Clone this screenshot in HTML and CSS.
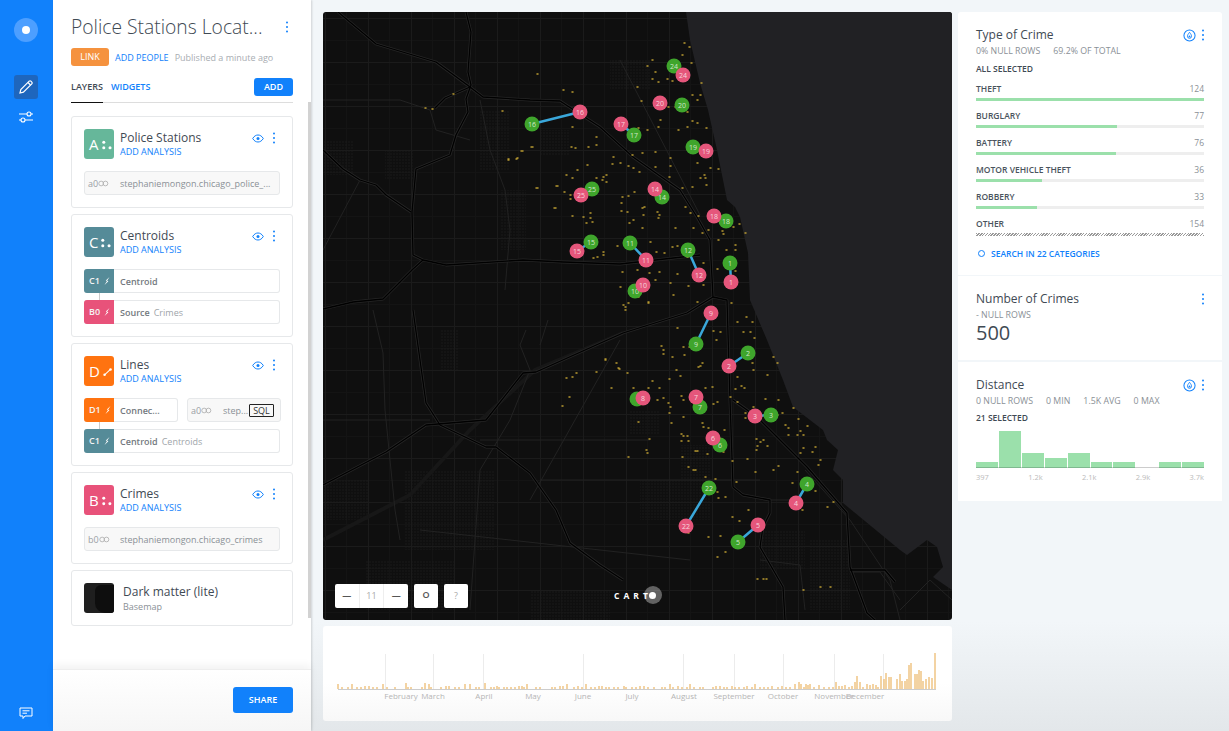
FILE: index.html
```html
<!DOCTYPE html>
<html>
<head>
  <meta charset="UTF-8">
  <title>Police Stations Locations</title>
  <link rel="stylesheet" href="styles.css">
</head>
<body>
  <svg class="defs" width="0" height="0">
    <symbol id="kebab" viewBox="0 0 4 12"><circle cx="2" cy="1.5" r="1"/><circle cx="2" cy="6" r="1"/><circle cx="2" cy="10.5" r="1"/></symbol>
    <symbol id="eye" viewBox="0 0 12 9"><path d="M.7 4.5C2.2 2 4 1 6 1s3.8 1 5.3 3.5C9.8 7 8 8 6 8S2.200 7 .7 4.500z" fill="none" stroke="currentColor" stroke-width="1"/><circle cx="6" cy="4.500" r="1.500" fill="currentColor"/></symbol>
    <symbol id="bolt" viewBox="0 0 6 8"><path d="M5.500 0 1.800 3.400 3 3.900.5 8 4.400 4.200 3.100 3.700z" fill="currentColor"/></symbol>
    <symbol id="points" viewBox="0 0 14 10"><circle cx="2" cy="2" r="1.700"/><circle cx="2" cy="8" r="1.700"/><circle cx="9" cy="8" r="1.700"/></symbol>
    <symbol id="link" viewBox="0 0 14 8"><circle cx="4" cy="4" r="3" fill="none" stroke="currentColor"/><circle cx="9.500" cy="4" r="3" fill="none" stroke="currentColor"/></symbol>
    <symbol id="drop" viewBox="0 0 14 14"><circle cx="7" cy="7" r="6" fill="none" stroke="currentColor" stroke-width="1.100"/><path d="M7 3.600C8.300 5.300 9.200 6.400 9.200 7.800a2.200 2.200 0 0 1-4.400 0C4.800 6.400 5.700 5.300 7 3.600z" fill="none" stroke="currentColor" stroke-width="1"/><circle cx="7" cy="8" r="1" fill="currentColor"/></symbol>
  </svg>

  <nav class="nav">
    <div class="nav-logo"><span></span></div>
    <a class="nav-item is-active">
      <svg width="16" height="16" viewBox="0 0 16 16" fill="none" stroke="#fff" stroke-width="1.200"><path d="M2 14l.8-3.400L11.200 2.200a1.200 1.200 0 0 1 1.700 0l.9.900a1.200 1.200 0 0 1 0 1.700L5.400 13.200z"/><path d="M10 3.500l2.500 2.500"/></svg>
    </a>
    <a class="nav-item">
      <svg width="16" height="14" viewBox="0 0 16 14" fill="none" stroke="#fff" stroke-width="1.100"><path d="M1 4h8M13 4h2M1 10h2M7 10h8"/><circle cx="11" cy="4" r="2"/><circle cx="5" cy="10" r="2"/></svg>
    </a>
    <a class="nav-chat">
      <svg width="14" height="13" viewBox="0 0 14 13" fill="none" stroke="#fff" stroke-width="1"><path d="M1 1h12v8H6L4 11.500V9H1z"/><path d="M3.500 3.800h7M3.500 6.200h4.500"/></svg>
    </a>
  </nav>

  <aside class="panel">
    <header class="panel-head">
      <div class="title-row">
        <h1>Police Stations Locat...</h1>
        <svg class="kebab"><use href="#kebab"/></svg>
      </div>
      <div class="meta-row">
        <span class="btn-link">LINK</span>
        <a class="blue">ADD PEOPLE</a>
        <span class="muted">Published a minute ago</span>
      </div>
      <div class="tabs">
        <a class="tab is-active">LAYERS</a>
        <a class="tab blue">WIDGETS</a>
        <span class="btn-add">ADD</span>
      </div>
    </header>

    <div class="layers">
      <section class="card">
        <div class="card-head">
          <div class="badge green">A<svg><use href="#points"/></svg></div>
          <div class="card-title"><h3>Police Stations</h3><a class="blue">ADD ANALYSIS</a></div>
          <svg class="eye"><use href="#eye"/></svg>
          <svg class="kebab"><use href="#kebab"/></svg>
        </div>
        <div class="source"><span class="node-id">a0<svg><use href="#link"/></svg></span><span class="source-name">stephaniemongon.chicago_police_...</span></div>
      </section>

      <section class="card">
        <div class="card-head">
          <div class="badge teal">C<svg><use href="#points"/></svg></div>
          <div class="card-title"><h3>Centroids</h3><a class="blue">ADD ANALYSIS</a></div>
          <svg class="eye"><use href="#eye"/></svg>
          <svg class="kebab"><use href="#kebab"/></svg>
        </div>
        <div class="nodes">
          <div class="node"><span class="node-tag teal">C1<svg><use href="#bolt"/></svg></span><b>Centroid</b></div>
          <div class="node"><span class="node-tag pink">B0<svg><use href="#bolt"/></svg></span><b>Source</b><i>Crimes</i></div>
        </div>
      </section>

      <section class="card">
        <div class="card-head">
          <div class="badge orange">D<svg viewBox="0 0 14 10"><path d="M2 8.500 9 2" stroke="#fff" stroke-width="1.300"/><circle cx="2" cy="8.500" r="1.600"/><circle cx="9.500" cy="1.800" r="1.600"/></svg></div>
          <div class="card-title"><h3>Lines</h3><a class="blue">ADD ANALYSIS</a></div>
          <svg class="eye"><use href="#eye"/></svg>
          <svg class="kebab"><use href="#kebab"/></svg>
        </div>
        <div class="nodes">
          <div class="node-split">
            <div class="node"><span class="node-tag orange">D1<svg><use href="#bolt"/></svg></span><b>Connec...</b></div>
            <div class="source source-small"><span class="node-id">a0<svg><use href="#link"/></svg></span><span class="source-name">step...</span><span class="sql">SQL</span></div>
          </div>
          <div class="node"><span class="node-tag teal">C1<svg><use href="#bolt"/></svg></span><b>Centroid</b><i>Centroids</i></div>
        </div>
      </section>

      <section class="card">
        <div class="card-head">
          <div class="badge pink">B<svg><use href="#points"/></svg></div>
          <div class="card-title"><h3>Crimes</h3><a class="blue">ADD ANALYSIS</a></div>
          <svg class="eye"><use href="#eye"/></svg>
          <svg class="kebab"><use href="#kebab"/></svg>
        </div>
        <div class="source"><span class="node-id">b0<svg><use href="#link"/></svg></span><span class="source-name">stephaniemongon.chicago_crimes</span></div>
      </section>

      <section class="card card-base">
        <div class="thumb"><span></span></div>
        <div class="base-title"><h3>Dark matter (lite)</h3><span>Basemap</span></div>
      </section>
    </div>

    <div class="scrollbar"></div>

    <footer class="panel-foot"><span class="btn-share">SHARE</span></footer>
  </aside>

  <main class="content">
    <div class="stage">
      <div class="map">
        <svg class="map-svg" viewBox="323 12 629 608" width="629" height="608">
          <defs>
            <pattern id="grid" x="325" y="18" width="43" height="44" patternUnits="userSpaceOnUse">
              <path d="M21.500 0V44M0 22.500H43" stroke="#141414" stroke-width="1" fill="none"/>
              <path d="M.5 0V44M0 .5H43" stroke="#1b1b1b" stroke-width="1" fill="none"/>
            </pattern>
            <pattern id="hatch" width="3" height="3" patternUnits="userSpaceOnUse">
              <circle cx="1" cy="1" r=".7" fill="#1b1b1b"/>
            </pattern>
          </defs>
          <rect x="323" y="12" width="629" height="608" fill="#0f0f0f"/>
          <rect x="323" y="12" width="629" height="608" fill="url(#grid)"/>

          <g fill="url(#hatch)">
            <rect x="323" y="140" width="30" height="35"/><rect x="385" y="150" width="28" height="30"/>
            <rect x="480" y="110" width="30" height="60"/><rect x="500" y="190" width="26" height="60"/>
            <rect x="323" y="480" width="45" height="40"/><rect x="405" y="470" width="90" height="80"/>
            <rect x="365" y="560" width="90" height="50"/><rect x="440" y="330" width="18" height="40"/>
            <rect x="540" y="130" width="30" height="25"/><rect x="610" y="60" width="40" height="30"/>
            <rect x="640" y="480" width="70" height="40"/><rect x="530" y="590" width="80" height="30"/>
            <rect x="680" y="445" width="30" height="35"/><rect x="630" y="410" width="30" height="25"/>
            <rect x="760" y="530" width="45" height="40"/><rect x="810" y="540" width="40" height="70"/>
          </g>

          <path class="lake" d="M686 12 690 40 700 83 708 110 717 150 727 200 735 207 740 217 748 253 750 300 767 340 783 380 793 407 823 430 827 440 838 450 833 470 843 480 843 503 860 517 900 550 907 555 927 540 937 547 943 567 933 577 952 590V535L940 543 952 537V12Z"/>

          <g class="road-wide">
            <path d="M323 540 410 495 470 430 535 370 623 333"/>
          </g>
          <g class="road">
            <path d="M373 310 383 353 385 410 395 510 400 540"/>
            <path d="M323 100H400L430 110 436 130 470 140"/>
            <path d="M480 100 490 150 505 190 510 230 505 290"/>
            <path d="M526 330 520 345 530 370 510 420 480 470 470 610"/>
            <path d="M323 420H430M480 440H650M540 480H760M420 530 600 550 690 560M530 500 620 340"/>
            <path d="M548 320 540 345M323 250 360 180M620 60 700 215"/>
            <path d="M766 500 800 500M805 470 850 520 890 580 900 620"/>
            <path d="M760 560 800 565 805 610M850 572H880L900 600M952 600 930 580 900 610"/>
          </g>
          <g id="highways">
            <path d="M338 12 376 44 436 62 470 87 483 97 530 100 560 101 600 127 633 157 680 190 697 217 710 240 713 297 727 300 730 400 733 487 743 495 770 500 770 513 763 527 760 547 783 587 785 620"/>
            <path d="M466 12 471 32 468 72 471 85 466 99 468 112 456 135 450 155 416 169 412 212 413 255 423 260 446 265 523 260 563 262 620 264 700 255"/>
            <path d="M323 150 343 169 360 180 376 185 386 195 411 212"/>
            <path d="M323 309 353 302 383 299 413 269 423 260"/>
            <path d="M323 485 386 452 426 425 486 420 523 373 536 372 623 333 687 313 713 297"/>
            <path d="M413 310 426 403 440 425 486 447 496 447 530 473 556 510 570 543 600 565 623 580"/>
            <path d="M733 400 757 417 807 467 847 513 850 567 867 613 875 620"/>
            <path d="M435 108 445 98 470 87M850 570H885L895 582"/>
          </g>
          <use href="#highways" class="highway-core"/>

          <path class="crime-dots" d="M537 74h1M684 43h1M689 47h1M682 55h1M691 63h1M647 66h1M652 60h1M655 72h1M652 79h1M658 82h1M667 79h1M672 81h1M701 83h1M637 87h1M692 95h1M700 95h1M697 100h1M641 101h1M675 107h1M668 107h1M687 112h1M692 121h1M697 123h1M687 127h1M706 128h1M678 130h1M660 120h1M658 127h1M638 128h1M647 130h1M563 90h1M572 92h1M502 111h1M572 127h1M596 137h1M588 147h1M571 147h1M575 148h1M596 145h1M532 147h1M522 151h1M517 158h1M508 159h1M613 157h1M612 164h1M620 163h1M632 155h1M642 153h1M655 152h1M628 166h1M633 168h1M639 172h1M655 167h1M670 158h1M670 166h1M669 177h1M697 163h1M710 168h1M718 169h1M704 175h1M700 178h1M705 178h1M706 185h1M682 188h1M692 187h1M577 170h1M587 165h1M566 175h1M572 178h1M596 178h1M603 177h1M606 175h1M602 180h1M606 182h1M537 188h1M557 186h1M564 192h1M570 195h1M570 199h1M622 197h1M628 196h1M634 192h1M621 203h1M644 207h1M642 208h1M554 208h1M572 216h1M583 217h1M590 213h1M590 218h1M586 223h1M592 222h1M621 211h1M627 212h1M633 220h1M629 223h1M643 215h1M642 228h1M657 212h1M659 215h1M658 218h1M685 207h1M690 213h1M698 216h1M675 228h1M693 228h1M708 230h1M702 233h1M718 240h1M722 231h1M723 234h1M739 224h1M733 227h1M745 233h1M735 245h1M735 250h1M726 250h1M650 242h1M617 246h1M603 252h1M593 258h1M597 257h1M603 255h1M656 252h1M664 253h1M672 247h1M677 246h1M687 257h1M703 263h1M717 269h1M735 271h1M622 272h1M637 270h1M649 273h1M659 272h1M677 274h1M670 283h1M620 287h1M625 307h1M655 280h1M673 295h1M688 286h1M703 285h1M648 303h1M638 297h1M697 302h1M623 305h1M628 303h1M648 302h1M625 310h1M731 303h1M746 317h1M737 322h1M752 322h1M743 332h1M750 332h1M754 338h1M677 328h1M713 331h1M720 332h1M716 340h1M661 346h1M663 350h1M663 354h1M683 347h1M689 347h1M684 355h1M672 357h1M605 359h1M616 363h1M618 368h1M627 373h1M698 367h1M702 363h1M700 366h1M676 370h1M680 376h1M669 379h1M737 377h1M741 386h1M744 388h1M735 389h1M753 370h1M752 363h1M773 357h1M777 363h1M767 375h1M611 388h1M633 388h1M652 381h1M648 388h1M659 388h1M657 400h1M663 398h1M681 396h1M683 400h1M668 403h1M670 407h1M669 413h1M671 423h1M638 422h1M683 417h1M705 388h1M712 387h1M717 402h1M713 404h1M730 397h1M737 402h1M753 407h1M765 399h1M778 400h1M793 408h1M782 413h1M777 415h1M798 419h1M745 413h1M745 418h1M785 425h1M807 426h1M788 428h1M800 431h1M803 435h1M797 435h1M788 435h1M702 423h1M703 427h1M708 428h1M724 430h1M681 434h1M683 436h1M681 441h1M687 436h1M688 441h1M649 439h1M646 450h1M647 453h1M628 457h1M695 451h1M697 451h1M707 454h1M723 452h1M682 457h1M732 461h1M747 459h1M756 439h1M760 442h1M763 440h1M757 446h1M756 450h1M767 446h1M803 448h1M815 447h1M812 452h1M820 460h1M818 465h1M800 453h1M797 472h1M778 466h1M773 470h1M755 472h1M688 467h1M693 470h1M695 470h1M705 477h1M715 479h1M736 482h1M792 483h1M815 491h1M718 498h1M725 497h1M717 492h1M827 507h1M802 510h1M748 510h1M732 517h1M739 521h1M720 536h1M708 537h1M688 533h1M725 552h1M717 557h1M757 579h1M763 579h1M766 579h1M803 590h1M820 587h1M830 587h1M833 502h1M453 94h1M425 108h1M432 109h1M502 111h1M508 160h1M516 159h1M521 151h1M531 147h1M536 188h1M556 186h1M555 208h1M566 378h1M572 377h1M576 373h1M596 372h1M605 360h1M616 363h1M619 369h1M611 388h1M569 397h1M562 406h1"/>

          <g class="links">
            <path d="M532 124 580 112M621 124 634 135M646 260 630 243M688 250 699 275M730 263 731 282M577 251 591 242M711 313 696 344M748 353 729 366M755 416 771 415M709 488 686 526M758 525 738 542M807 484 796 503"/>
          </g>

          <g class="pins">
            <circle class="pin-g" cx="532" cy="124" r="7.500"/><text x="532" y="126.500">16</text>
            <circle class="pin-r" cx="580" cy="112" r="7.500"/><text x="580" y="114.500">16</text>
            <circle class="pin-g" cx="634" cy="135" r="7.500"/><text x="634" y="137.500">17</text>
            <circle class="pin-r" cx="621" cy="124" r="7.500"/><text x="621" y="126.500">17</text>
            <circle class="pin-g" cx="674" cy="66" r="7.500"/><text x="674" y="68.500">24</text>
            <circle class="pin-r" cx="683" cy="75" r="7.500"/><text x="683" y="77.500">24</text>
            <circle class="pin-r" cx="660" cy="103" r="7.500"/><text x="660" y="105.500">20</text>
            <circle class="pin-g" cx="682" cy="105" r="7.500"/><text x="682" y="107.500">20</text>
            <circle class="pin-g" cx="693" cy="147" r="7.500"/><text x="693" y="149.500">19</text>
            <circle class="pin-r" cx="706" cy="151" r="7.500"/><text x="706" y="153.500">19</text>
            <circle class="pin-g" cx="592" cy="189" r="7.500"/><text x="592" y="191.500">25</text>
            <circle class="pin-r" cx="581" cy="195" r="7.500"/><text x="581" y="197.500">25</text>
            <circle class="pin-g" cx="662" cy="197" r="7.500"/><text x="662" y="199.500">14</text>
            <circle class="pin-r" cx="655" cy="189" r="7.500"/><text x="655" y="191.500">14</text>
            <circle class="pin-g" cx="726" cy="221" r="7.500"/><text x="726" y="223.500">18</text>
            <circle class="pin-r" cx="714" cy="216" r="7.500"/><text x="714" y="218.500">18</text>
            <circle class="pin-g" cx="591" cy="242" r="7.500"/><text x="591" y="244.500">15</text>
            <circle class="pin-r" cx="577" cy="251" r="7.500"/><text x="577" y="253.500">15</text>
            <circle class="pin-g" cx="630" cy="243" r="7.500"/><text x="630" y="245.500">11</text>
            <circle class="pin-r" cx="646" cy="260" r="7.500"/><text x="646" y="262.500">11</text>
            <circle class="pin-g" cx="688" cy="250" r="7.500"/><text x="688" y="252.500">12</text>
            <circle class="pin-r" cx="699" cy="275" r="7.500"/><text x="699" y="277.500">12</text>
            <circle class="pin-g" cx="730" cy="263" r="7.500"/><text x="730" y="265.500">1</text>
            <circle class="pin-r" cx="731" cy="282" r="7.500"/><text x="731" y="284.500">1</text>
            <circle class="pin-g" cx="635" cy="291" r="7.500"/><text x="635" y="293.500">10</text>
            <circle class="pin-r" cx="643" cy="285" r="7.500"/><text x="643" y="287.500">10</text>
            <circle class="pin-r" cx="711" cy="313" r="7.500"/><text x="711" y="315.500">9</text>
            <circle class="pin-g" cx="696" cy="344" r="7.500"/><text x="696" y="346.500">9</text>
            <circle class="pin-g" cx="748" cy="353" r="7.500"/><text x="748" y="355.500">2</text>
            <circle class="pin-r" cx="729" cy="366" r="7.500"/><text x="729" y="368.500">2</text>
            <circle class="pin-g" cx="637" cy="399" r="7.500"/>
            <circle class="pin-r" cx="643" cy="398" r="7.500"/><text x="643" y="400.500">8</text>
            <circle class="pin-g" cx="700" cy="407" r="7.500"/><text x="700" y="409.500">7</text>
            <circle class="pin-r" cx="696" cy="397" r="7.500"/><text x="696" y="399.500">7</text>
            <circle class="pin-r" cx="755" cy="416" r="7.500"/><text x="755" y="418.500">3</text>
            <circle class="pin-g" cx="771" cy="415" r="7.500"/><text x="771" y="417.500">3</text>
            <circle class="pin-g" cx="720" cy="445" r="7.500"/><text x="720" y="447.500">6</text>
            <circle class="pin-r" cx="713" cy="438" r="7.500"/><text x="713" y="440.500">6</text>
            <circle class="pin-g" cx="709" cy="488" r="7.500"/><text x="709" y="490.500">22</text>
            <circle class="pin-r" cx="686" cy="526" r="7.500"/><text x="686" y="528.500">22</text>
            <circle class="pin-r" cx="758" cy="525" r="7.500"/><text x="758" y="527.500">5</text>
            <circle class="pin-g" cx="738" cy="542" r="7.500"/><text x="738" y="544.500">5</text>
            <circle class="pin-g" cx="807" cy="484" r="7.500"/><text x="807" y="486.500">4</text>
            <circle class="pin-r" cx="796" cy="503" r="7.500"/><text x="796" y="505.500">4</text>
          </g>
        </svg>

        <div class="map-controls">
          <div class="zoom-group"><span class="ctl-cell">—</span><span class="ctl-cell ctl-num">11</span><span class="ctl-cell">—</span></div>
          <span class="ctl-btn ctl-search">O</span>
          <span class="ctl-btn ctl-help">?</span>
        </div>
        <div class="carto">CART<span class="carto-o"><span></span></span></div>
      </div>

      <div class="timeline">
        <svg viewBox="323 626 629 95" width="629" height="95">
          <path class="tl-grid" d="M385.500 654V689M433.500 654V689M483.500 654V689M583.500 654V689M683.500 654V689M734.500 654V689M783.500 654V689M834.500 654V689M883.500 654V689"/>
          <path class="tl-bars" d="M338 689v-5M342 689v-2M348 689v-2M352 689v-5M357 689v-2M361 689v-2M365 689v-3M369 689v-3M373 689v-2M377 689v-2M383 689v-5M387 689v-2M395 689v-2M406 689v-6M408 689v-2M411 689v-2M422 689v-2M425 689v-6M429 689v-5M431 689v-2M441 689v-2M446 689v-3M449 689v-3M455 689v-2M459 689v-2M465 689v-5M470 689v-5M476 689v-2M479 689v-2M485 689v-6M491 689v-2M494 689v-2M497 689v-3M499 689v-2M504 689v-2M507 689v-2M511 689v-2M515 689v-2M519 689v-3M522 689v-3M524 689v-2M527 689v-5M536 689v-2M540 689v-2M552 689v-2M555 689v-2M560 689v-3M563 689v-3M567 689v-5M574 689v-2M578 689v-3M582 689v-2M586 689v-5M591 689v-2M595 689v-2M599 689v-3M602 689v-3M606 689v-2M609 689v-2M614 689v-2M618 689v-2M624 689v-3M626 689v-2M632 689v-2M636 689v-2M640 689v-3M644 689v-3M648 689v-2M654 689v-2M662 689v-2M665 689v-2M670 689v-5M673 689v-2M678 689v-3M682 689v-2M687 689v-2M690 689v-5M694 689v-2M700 689v-2M703 689v-2M713 689v-2M716 689v-3M720 689v-3M724 689v-2M727 689v-2M732 689v-3M735 689v-2M739 689v-2M744 689v-2M747 689v-3M752 689v-2M755 689v-5M760 689v-2M764 689v-2M768 689v-2M772 689v-3M778 689v-2M782 689v-3M786 689v-2M790 689v-2M795 689v-5M799 689v-7M801 689v-5M804 689v-2M806 689v-5M808 689v-4M810 689v-5M814 689v-2M819 689v-4M824 689v-2M829 689v-2M833 689v-2M836 689v-7M839 689v-3M842 689v-3M845 689v-4M849 689v-2M852 689v-3M855 689v-7M857 689v-13M860 689v-7M863 689v-2M867 689v-5M870 689v-4M873 689v-5M876 689v-4M878 689v-2M881 689v-13M884 689v-10M886 689v-16M889 689v-12M891 689v-12M897 689v-10M900 689v-15M902 689v-8M905 689v-8M907 689v-10M909 689v-24M911 689v-26M915 689v-15M917 689v-15M919 689v-19M921 689v-18M923 689v-8M926 689v-10M929 689v-12M932 689v-11M935 689v-36"/>
          <path class="tl-axis" d="M338 689.500H936"/>
          <g class="tl-labels">
            <text x="401" y="699">February</text><text x="433" y="699">March</text><text x="484" y="699">April</text>
            <text x="533" y="699">May</text><text x="583" y="699">June</text><text x="632" y="699">July</text>
            <text x="684" y="699">August</text><text x="734" y="699">September</text><text x="783" y="699">October</text>
            <text x="834" y="699">November</text><text x="865" y="699">December</text>
          </g>
        </svg>
      </div>
    </div>

    <div class="widgets">
      <section class="widget widget-cat">
        <div class="widget-head"><h4>Type of Crime</h4><svg class="drop"><use href="#drop"/></svg><svg class="kebab"><use href="#kebab"/></svg></div>
        <div class="stats"><span>0% NULL ROWS</span><span>69.2% OF TOTAL</span></div>
        <div class="selected">ALL SELECTED</div>
        <div class="cats">
          <div class="cat"><div class="cat-row"><b>THEFT</b><span>124</span></div><div class="track"><div class="fill" style="width:100%"></div></div></div>
          <div class="cat"><div class="cat-row"><b>BURGLARY</b><span>77</span></div><div class="track"><div class="fill" style="width:62%"></div></div></div>
          <div class="cat"><div class="cat-row"><b>BATTERY</b><span>76</span></div><div class="track"><div class="fill" style="width:61.300%"></div></div></div>
          <div class="cat"><div class="cat-row"><b>MOTOR VEHICLE THEFT</b><span>36</span></div><div class="track"><div class="fill" style="width:29%"></div></div></div>
          <div class="cat"><div class="cat-row"><b>ROBBERY</b><span>33</span></div><div class="track"><div class="fill" style="width:26.600%"></div></div></div>
          <div class="cat"><div class="cat-row"><b>OTHER</b><span>154</span></div><div class="track track-other"></div></div>
        </div>
        <a class="search-cat"><i></i>SEARCH IN 22 CATEGORIES</a>
      </section>

      <section class="widget widget-num">
        <div class="widget-head"><h4>Number of Crimes</h4><svg class="kebab"><use href="#kebab"/></svg></div>
        <div class="stats"><span>- NULL ROWS</span></div>
        <div class="big">500</div>
      </section>

      <section class="widget widget-hist">
        <div class="widget-head"><h4>Distance</h4><svg class="drop"><use href="#drop"/></svg><svg class="kebab"><use href="#kebab"/></svg></div>
        <div class="stats"><span>0 NULL ROWS</span><span>0 MIN</span><span>1.5K AVG</span><span>0 MAX</span></div>
        <div class="selected">21 SELECTED</div>
        <div class="hist">
          <div class="hist-bar" style="height:5px"></div>
          <div class="hist-bar" style="height:36px"></div>
          <div class="hist-bar" style="height:14px"></div>
          <div class="hist-bar" style="height:9px"></div>
          <div class="hist-bar" style="height:14px"></div>
          <div class="hist-bar" style="height:5px"></div>
          <div class="hist-bar" style="height:5px"></div>
          <div class="hist-bar" style="height:0"></div>
          <div class="hist-bar" style="height:5px"></div>
          <div class="hist-bar" style="height:5px"></div>
        </div>
        <div class="hist-axis"><span>397</span><span>1.2k</span><span>2.1k</span><span>2.9k</span><span>3.7k</span></div>
      </section>
    </div>
  </main>
</body>
</html>
```

FILE: styles.css
```css
html, body {
  margin: 0;
  height: 100%;
}
body {
  display: flex;
  height: 731px;
  overflow: hidden;
  font-family: "Open Sans", sans-serif;
  color: #3f4a54;
  background: linear-gradient(#f2f6f9 85%, #e3e7ea 100%);
}
h1, h3, h4 {
  margin: 0;
  font-weight: 400;
}
.defs {
  position: absolute;
}
.blue {
  color: #1181fb;
}
.muted {
  color: #a8adb2;
}

/* left nav */
.nav {
  width: 53px;
  flex: none;
  background: #1181fb;
  display: flex;
  flex-direction: column;
  align-items: center;
  padding: 18px 1px 0 0;
  box-sizing: border-box;
}
.nav-logo {
  width: 24px;
  height: 24px;
  border-radius: 50%;
  background: #4d9fff;
  display: flex;
  align-items: center;
  justify-content: center;
  margin-bottom: 33px;
}
.nav-logo span {
  width: 8px;
  height: 8px;
  background: #fff;
  border-radius: 50%;
}
.nav-item {
  width: 24px;
  height: 24px;
  border-radius: 3px;
  display: flex;
  align-items: center;
  justify-content: center;
}
.nav-item.is-active {
  background: #1e66bd;
  margin-bottom: 6px;
}
.nav-chat {
  margin-top: auto;
  margin-bottom: 15px;
  height: 13px;
}

/* layers panel */
.panel {
  width: 258px;
  flex: none;
  background: #fff;
  position: relative;
  display: flex;
  flex-direction: column;
  box-shadow: 1px 0 2px rgba(0, 0, 0, .15);
  z-index: 2;
}
.panel-head {
  padding: 15px 18px 0;
}
.title-row {
  display: flex;
  align-items: center;
  justify-content: space-between;
  height: 24px;
}
.title-row h1 {
  font-size: 19.300px;
  font-weight: 300;
  line-height: 24px;
  color: #3f4a54;
  white-space: nowrap;
}
.kebab {
  width: 4px;
  height: 12px;
  fill: #1181fb;
  flex: none;
}
.title-row .kebab {
  margin-right: 4px;
}
.meta-row {
  display: flex;
  align-items: center;
  gap: 6px;
  margin-top: 9px;
  font-size: 9px;
  height: 18px;
  white-space: nowrap;
}
.btn-link {
  width: 38px;
  height: 18px;
  background: #f5923e;
  color: #fff;
  border-radius: 3px;
  text-align: center;
  line-height: 18px;
}
.tabs {
  display: flex;
  align-items: center;
  gap: 8px;
  height: 24px;
  margin-top: 12px;
  border-bottom: 1px solid #ddd;
  padding-bottom: 0;
  font-size: 9px;
  font-weight: 600;
  position: relative;
}
.tab {
  height: 24px;
  line-height: 18px;
}
.tab.is-active {
  border-bottom: 1px solid #111;
  color: #3f4a54;
}
.btn-add {
  margin-left: auto;
  width: 39px;
  height: 18px;
  margin-bottom: 6px;
  background: #1181fb;
  color: #fff;
  text-align: center;
  line-height: 18px;
  border-radius: 3px;
}

.layers {
  display: flex;
  flex-direction: column;
  gap: 6px;
  margin-top: 13px;
  padding: 0 18px;
}
.card {
  border: 1px solid #e6e8ea;
  border-radius: 3px;
  padding: 12px;
}
.card-head {
  display: flex;
  align-items: flex-start;
  height: 30px;
  margin-bottom: 12px;
}
.badge {
  width: 30px;
  height: 30px;
  flex: none;
  border-radius: 3px;
  color: #fff;
  font-size: 15px;
  line-height: 30px;
  padding-left: 5px;
  box-sizing: border-box;
  display: flex;
  align-items: center;
  gap: 3px;
}
.badge svg {
  width: 14px;
  height: 10px;
  fill: #fff;
  margin-top: 1px;
}
.green { background: #66b79a; }
.teal { background: #558b98; }
.orange { background: #ff7310; }
.pink { background: #e8527a; }
.card-title {
  margin-left: 6px;
  padding-top: 1px;
  flex: 1;
  font-size: 9px;
  line-height: 11px;
}
.card-title h3 {
  font-size: 12px;
  line-height: 16px;
  color: #3f4a54;
}
.eye {
  width: 12px;
  height: 9px;
  color: #1181fb;
  margin: 5px 8px 0 0;
}
.card-head .kebab {
  margin: 3px 4px 0 0;
}
.source {
  height: 24px;
  box-sizing: border-box;
  display: flex;
  align-items: center;
  background: #f8f8f8;
  border: 1px solid #e6e8ea;
  border-radius: 3px;
  font-size: 9px;
  color: #8a9096;
  white-space: nowrap;
}
.node-id {
  width: 35px;
  flex: none;
  padding-left: 3px;
  box-sizing: border-box;
  display: flex;
  align-items: center;
  color: #9aa0a5;
}
.node-id svg {
  width: 11px;
  height: 7px;
  color: #aaa;
}
.nodes {
  display: flex;
  flex-direction: column;
  gap: 7px;
  position: relative;
}
.nodes::before {
  content: "";
  position: absolute;
  left: 15px;
  top: 20px;
  width: 1px;
  height: 16px;
  background: #ccc;
}
.node {
  height: 24px;
  box-sizing: border-box;
  display: flex;
  align-items: center;
  border: 1px solid #e6e8ea;
  border-left: 0;
  border-radius: 3px;
  font-size: 9px;
  white-space: nowrap;
  flex: 1;
}
.node b {
  font-weight: 600;
  color: #73797e;
  margin-left: 6px;
}
.node i {
  font-style: normal;
  color: #a0a5aa;
  margin-left: 4px;
}
.node-tag {
  width: 30px;
  height: 24px;
  flex: none;
  border-radius: 3px 0 0 3px;
  color: #f4f4f4;
  font-weight: 600;
  line-height: 24px;
  padding-left: 5px;
  box-sizing: border-box;
  display: flex;
  align-items: center;
  gap: 4px;
  margin: -1px 0;
  position: relative;
  z-index: 1;
}
.node-tag svg {
  width: 6px;
  height: 8px;
  color: #fff;
}
.node-split {
  display: flex;
  gap: 9px;
  margin-right: -1px;
}
.source-small {
  width: 94px;
  flex: none;
  position: relative;
}
.sql {
  border: 1px solid #222;
  border-radius: 1px;
  color: #333;
  height: 11px;
  line-height: 11px;
  padding: 0 3px;
  margin-left: 1px;
}
.card-base {
  display: flex;
  align-items: flex-start;
}
.thumb {
  width: 30px;
  height: 30px;
  border-radius: 3px;
  background: #1f1f1f;
  overflow: hidden;
  position: relative;
}
.thumb span {
  position: absolute;
  left: 11px;
  top: 2px;
  width: 19px;
  height: 28px;
  background: #0e0e0e;
  border-radius: 6px 0 0 10px;
}
.base-title {
  margin-left: 9px;
  font-size: 9px;
  line-height: 12px;
  color: #8a9096;
}
.base-title h3 {
  font-size: 12px;
  line-height: 18px;
  color: #3f4a54;
}
.scrollbar {
  position: absolute;
  right: 0;
  top: 102px;
  width: 3px;
  height: 516px;
  background: #d2d2d2;
}
.panel-foot {
  margin-top: auto;
  height: 62px;
  display: flex;
  justify-content: flex-end;
  padding: 17px 18px 0;
  box-sizing: border-box;
  background: linear-gradient(#fff, #f6f6f6);
  box-shadow: 0 -4px 8px rgba(0, 0, 0, .05);
  border-top: 1px solid #eee;
}
.btn-share {
  width: 60px;
  height: 26px;
  background: #1181fb;
  color: #fff;
  font-size: 9px;
  font-weight: 600;
  line-height: 26px;
  text-align: center;
  border-radius: 3px;
}

/* map area */
.content {
  flex: 1;
  display: flex;
  gap: 6px;
  padding: 12px 7px 10px 12px;
  min-width: 0;
}
.stage {
  width: 629px;
  flex: none;
  display: flex;
  flex-direction: column;
  gap: 6px;
}
.map {
  height: 608px;
  position: relative;
  border-radius: 3px;
  overflow: hidden;
}
.map-svg {
  display: block;
  --hw-color: #262626;
  --hw-width: 2.800;
}
.lake {
  fill: #212124;
}
.road path {
  fill: none;
  stroke: #222;
  stroke-width: 1;
}
.road-wide path {
  fill: none;
  stroke: #171717;
  stroke-width: 4;
}
#highways {
  fill: none;
  stroke: var(--hw-color);
  stroke-width: var(--hw-width);
  stroke-linejoin: round;
}
.highway-core {
  --hw-color: #000;
  --hw-width: 1.300;
}
.crime-dots {
  fill: none;
  stroke: #b89a30;
  stroke-width: 1.500;
  stroke-linecap: round;
}
.links path {
  fill: none;
  stroke: #3aa7da;
  stroke-width: 2.500;
}
.pin-g {
  fill: #3fa52c;
}
.pin-r {
  fill: #e5567b;
}
.pins text {
  font-size: 7px;
  fill: rgba(255, 255, 255, .75);
  text-anchor: middle;
}
.map-controls {
  position: absolute;
  left: 12px;
  bottom: 12px;
  display: flex;
  gap: 6px;
  height: 24px;
}
.zoom-group, .ctl-btn {
  background: #fff;
  border-radius: 2px;
  height: 24px;
  font-size: 9px;
  color: #555;
}
.zoom-group {
  display: flex;
  width: 73px;
}
.ctl-cell {
  flex: 1;
  text-align: center;
  line-height: 24px;
  font-weight: 600;
}
.ctl-num {
  color: #aaa;
  font-weight: 400;
  border-left: 1px solid #eee;
  border-right: 1px solid #eee;
}
.ctl-btn {
  width: 24px;
  text-align: center;
  line-height: 22px;
}
.ctl-search {
  font-weight: 600;
}
.ctl-help {
  color: #aaa;
  line-height: 24px;
}
.carto {
  position: absolute;
  left: 291px;
  top: 574px;
  display: flex;
  align-items: center;
  color: #fff;
  font-size: 8.500px;
  font-weight: 700;
  letter-spacing: 4px;
  height: 18px;
}
.carto-o {
  width: 18px;
  height: 18px;
  margin-left: -8px;
  border-radius: 50%;
  background: rgba(255, 255, 255, .35);
  display: flex;
  align-items: center;
  justify-content: center;
}
.carto-o span {
  width: 7px;
  height: 7px;
  background: #fff;
  border-radius: 50%;
}

/* timeline */
.timeline {
  height: 95px;
  background: linear-gradient(#fff 60%, #f8f8f8);
  border-radius: 3px;
}
.timeline svg {
  display: block;
}
.tl-grid {
  stroke: #ececec;
  stroke-width: 1;
  fill: none;
}
.tl-bars {
  stroke: #efc585;
  stroke-width: 1.500;
  fill: none;
}
.tl-axis {
  stroke: #ccc;
  stroke-width: 1;
}
.tl-labels text {
  font-size: 8px;
  fill: #b5b5b5;
  text-anchor: middle;
}

/* widgets */
.widgets {
  width: 264px;
  flex: none;
  display: flex;
  flex-direction: column;
  gap: 1px;
  align-self: flex-start;
}
.widget {
  background: #fff;
  padding: 15px 18px 0;
  box-sizing: border-box;
}
.widget-cat {
  height: 263px;
  border-radius: 3px 3px 0 0;
}
.widget-num {
  height: 84px;
  margin-bottom: 1px;
}
.widget-hist {
  height: 139px;
}
.widget-head {
  display: flex;
  align-items: center;
  height: 16px;
}
.widget-head h4 {
  font-size: 12px;
  flex: 1;
  line-height: 16px;
}
.drop {
  width: 13px;
  height: 13px;
  color: #1181fb;
  margin-right: 5px;
}
.widget-head .kebab {
  margin-right: -1px;
}
.stats {
  display: flex;
  gap: 13px;
  font-size: 8.800px;
  line-height: 12px;
  color: #8a9096;
  margin-top: 2px;
  white-space: nowrap;
}
.selected {
  font-size: 8.500px;
  font-weight: 600;
  color: #3f4a54;
  line-height: 12px;
  margin-top: 6px;
}
.widget-hist .selected {
  margin-top: 5px;
}
.cats {
  display: flex;
  flex-direction: column;
  gap: 7px;
  margin-top: 6px;
}
.cat-row {
  display: flex;
  justify-content: space-between;
  font-size: 8.500px;
  line-height: 15px;
  height: 15px;
  margin-bottom: 2px;
}
.cat-row b {
  font-weight: 600;
  color: #4a545d;
}
.cat-row span {
  color: #8a9096;
}
.track {
  height: 3px;
  background: #eee;
}
.fill {
  height: 3px;
  background: #9be0ab;
}
.track-other {
  background: repeating-linear-gradient(135deg, #999 0 1px, #fff 1px 2px);
}
.search-cat {
  display: flex;
  align-items: center;
  gap: 6px;
  margin-top: 12px;
  margin-left: 2px;
  font-size: 8.500px;
  font-weight: 600;
  color: #1181fb;
}
.search-cat i {
  width: 3px;
  height: 3px;
  border: 1px solid #1181fb;
  border-radius: 50%;
  padding: 1px;
}
.big {
  font-size: 20px;
  line-height: 26px;
  margin-top: -1px;
  color: #3f4a54;
}
.hist {
  display: flex;
  align-items: flex-end;
  gap: 1px;
  height: 36px;
  margin-top: 7px;
  border-bottom: 1px solid #ccc;
}
.hist-bar {
  flex: 1;
  background: #9be0ab;
  border-bottom: 1px solid #7fb98f;
  margin-bottom: -1px;
}
.hist-bar[style="height:0"] {
  border-bottom: 0;
}
.hist-axis {
  display: flex;
  justify-content: space-between;
  font-size: 7.500px;
  color: #bbb;
  line-height: 12px;
  margin-top: 3px;
}
```
